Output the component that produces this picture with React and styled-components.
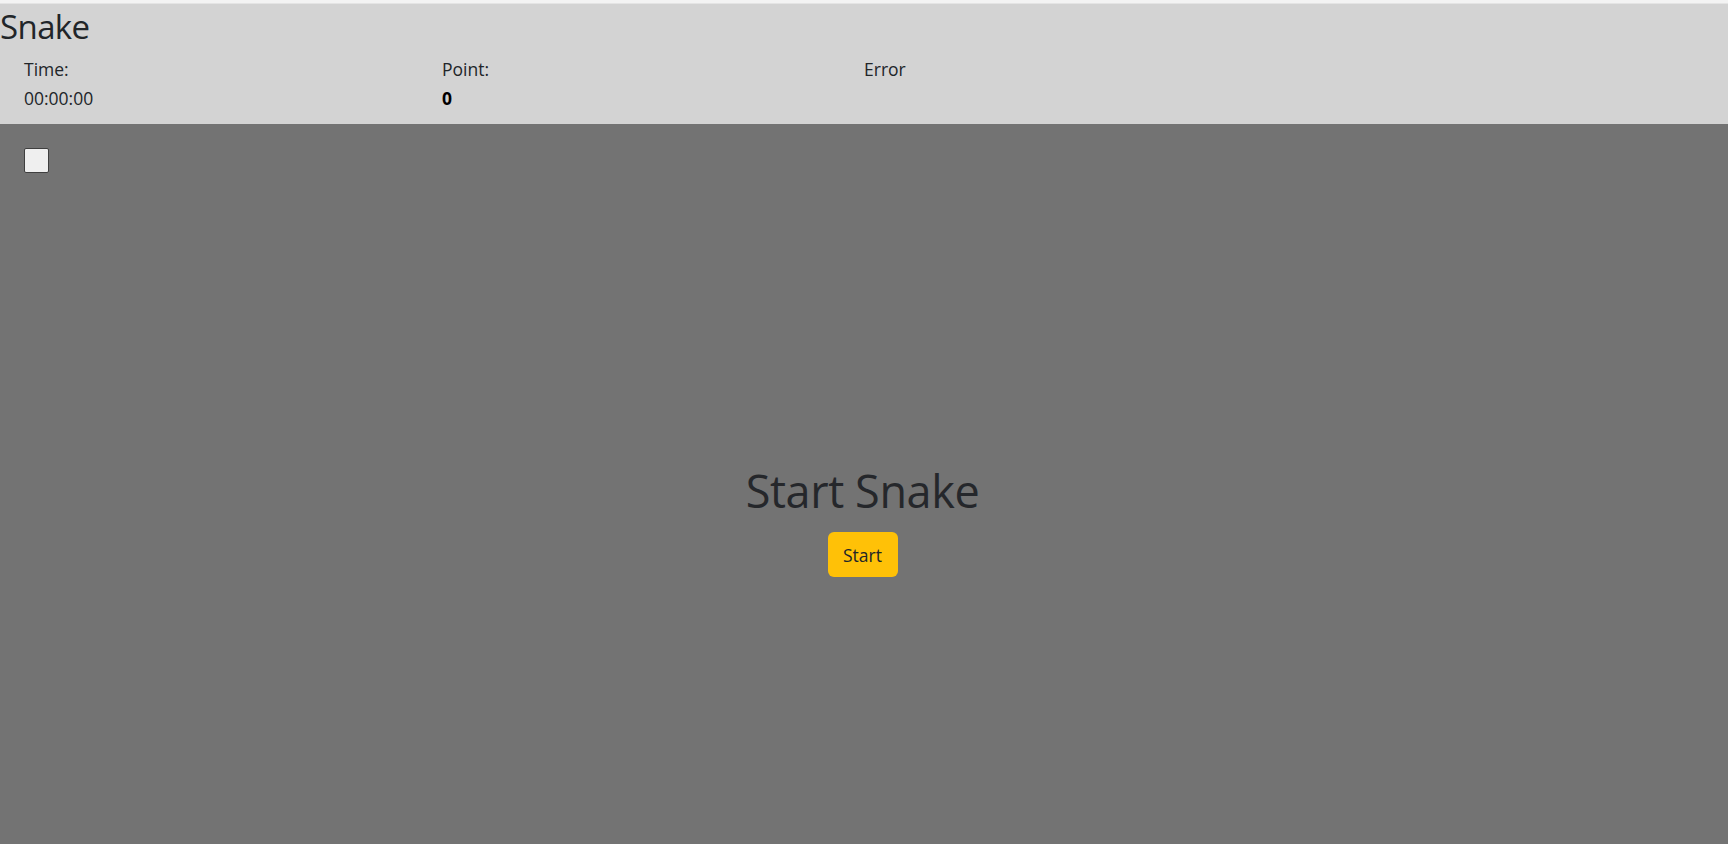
import React, { useState } from "react";
import styled, { createGlobalStyle } from "styled-components";

const GlobalStyle = createGlobalStyle`
  body {
    margin: 0;
    background: #ffffff;
    font-family: "Open Sans", "Noto Sans", sans-serif;
    color: #212529;
  }
`;

// 페이지 전체
const Page = styled.div`
  width: 1728px;
`;

const TopEdge = styled.div`
  height: 3px;
  background: #f3f3f3;
  border-bottom: 1px solid #e4e4e4;
`;

const Header = styled.header`
  background: #d3d3d3;
  height: 120px;
  box-sizing: border-box;
  padding-top: 2px;
`;

const Title = styled.h1`
  margin: 0;
  font-size: 33px;
  font-weight: 400;
  line-height: 42px;
  letter-spacing: -0.6px;
`;

const Stats = styled.div`
  display: flex;
  margin-top: 7px;
  padding-left: 24px;
`;

const Stat = styled.div`
  width: ${(props) => props.w || "auto"};
  font-size: 17.5px;
  line-height: 29px;
`;

const Value = styled.div`
  font-weight: ${(props) => (props.bold ? 700 : 400)};
  color: ${(props) => (props.bold ? "#000" : "inherit")};
`;

const Board = styled.main`
  background: #737373;
  height: 720px;
  box-sizing: border-box;
  padding: 24px;
`;

const Box = styled.input`
  appearance: none;
  display: block;
  margin: 0;
  width: 25px;
  height: 25px;
  background: #efefef;
  border: 1px solid #3f3f3f;
  border-radius: 2px;
`;

const Center = styled.div`
  display: flex;
  flex-direction: column;
  align-items: center;
  margin-top: 290px;
  padding-right: 3px;
`;

const BigTitle = styled.h2`
  margin: 0;
  font-size: 45px;
  font-weight: 400;
  line-height: 56px;
  letter-spacing: -0.4px;
  color: #25272b;
`;

const StartBtn = styled.button`
  margin-top: 13px;
  width: 70px;
  height: 45px;
  border: none;
  border-radius: 6px;
  background: #ffc107;
  color: #212529;
  font-family: inherit;
  font-size: 17.5px;
  cursor: pointer;
`;

function App() {
  let [point] = useState(0);

  return (
    <Page>
      <GlobalStyle />
      <TopEdge />
      <Header>
        <Title>Snake</Title>
        <Stats>
          <Stat w="418px">
            <div>Time:</div>
            <Value>00:00:00</Value>
          </Stat>
          <Stat w="422px">
            <div>Point:</div>
            <Value bold>{point}</Value>
          </Stat>
          <Stat>
            <div>Error</div>
          </Stat>
        </Stats>
      </Header>
      <Board>
        <Box type="checkbox" />
        <Center>
          <BigTitle>Start Snake</BigTitle>
          <StartBtn>Start</StartBtn>
        </Center>
      </Board>
    </Page>
  );
}

export default App;
